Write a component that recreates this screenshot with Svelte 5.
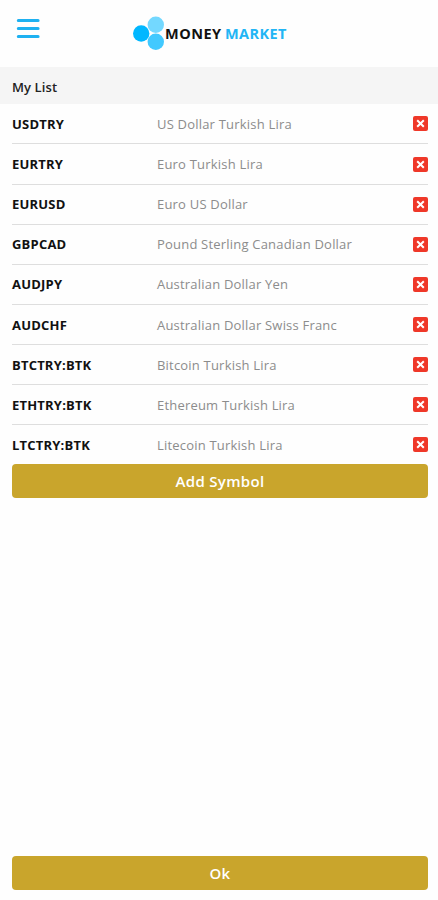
<script lang="ts">
  interface Item {
    symbol: string;
    name: string;
  }

  let items: Item[] = $state([
    { symbol: 'USDTRY', name: 'US Dollar Turkish Lira' },
    { symbol: 'EURTRY', name: 'Euro Turkish Lira' },
    { symbol: 'EURUSD', name: 'Euro US Dollar' },
    { symbol: 'GBPCAD', name: 'Pound Sterling Canadian Dollar' },
    { symbol: 'AUDJPY', name: 'Australian Dollar Yen' },
    { symbol: 'AUDCHF', name: 'Australian Dollar Swiss Franc' },
    { symbol: 'BTCTRY:BTK', name: 'Bitcoin Turkish Lira' },
    { symbol: 'ETHTRY:BTK', name: 'Ethereum Turkish Lira' },
    { symbol: 'LTCTRY:BTK', name: 'Litecoin Turkish Lira' },
  ]);

  function remove(symbol: string) {
    items = items.filter((item) => item.symbol !== symbol);
  }
</script>

<div class="screen">
  <header>
    <button class="menu" aria-label="Menu">
      <svg width="24" height="22" viewBox="0 0 24 22">
        <path d="M2.3 3.5h19.8M2.3 11.5h19.8M2.3 19.5h19.8" stroke="#1eb1f1" stroke-width="3" stroke-linecap="round" />
      </svg>
    </button>
    <div class="logo">
      <svg width="32" height="35" viewBox="0 0 32 35">
        <circle cx="22.8" cy="8.7" r="8.2" fill="#73d8ff" />
        <circle cx="22.8" cy="25.7" r="8.2" fill="#41c9ff" />
        <circle cx="8.2" cy="17.5" r="8.2" fill="#00b7ff" />
      </svg>
      <span class="money">MONEY</span>
      <span class="market">MARKET</span>
    </div>
  </header>

  <h2>My List</h2>

  <main>
    <ul>
      {#each items as item (item.symbol)}
        <li>
          <span class="symbol">{item.symbol}</span>
          <span class="name">{item.name}</span>
          <button class="remove" aria-label="Remove {item.symbol}" onclick={() => remove(item.symbol)}>
            <svg width="15" height="15" viewBox="0 0 15 15">
              <rect width="15" height="15" rx="2" fill="#ef3829" />
              <path d="M4.2 4.2l6.6 6.6M10.8 4.2l-6.6 6.6" stroke="#fff" stroke-width="2" />
            </svg>
          </button>
        </li>
      {/each}
    </ul>
    <button class="action">Add Symbol</button>
    <button class="action ok">Ok</button>
  </main>
</div>

<style>
  :global(body) {
    margin: 0;
    background: #fefefe;
  }

  .screen {
    display: flex;
    flex-direction: column;
    height: 900px;
    box-sizing: border-box;
    padding-bottom: 10px;
    background: #fefefe;
    font-family: 'Open Sans', 'Noto Sans', sans-serif;
  }

  button {
    padding: 0;
    border: 0;
    background: none;
    font-family: inherit;
    cursor: pointer;
  }

  svg {
    display: block;
  }

  header {
    display: flex;
    flex: none;
    height: 67px;
  }

  .menu {
    align-self: flex-start;
    margin: 17px 0 0 16px;
  }

  .logo {
    display: flex;
    align-items: center;
    height: 35px;
    margin: 16px 0 0 93px;
    font-size: 14.5px;
    font-weight: 700;
  }

  .money {
    width: 57px;
    color: #111;
    letter-spacing: 0.5px;
  }

  .market {
    margin-left: 3px;
    color: #22b5f5;
    letter-spacing: 0.4px;
  }

  h2 {
    flex: none;
    height: 37px;
    margin: 0;
    padding-left: 12px;
    background: #f5f5f5;
    color: #222;
    font-size: 13px;
    font-weight: 600;
    letter-spacing: 0.1px;
    line-height: 40px;
  }

  main {
    display: flex;
    flex: 1;
    flex-direction: column;
    padding: 0 10px 0 12px;
  }

  ul {
    margin: 0;
    padding: 0.3px 0 0;
    list-style: none;
  }

  li {
    display: flex;
    align-items: center;
    height: 40.15px;
    box-sizing: border-box;
    border-bottom: 1px solid #dedede;
    font-size: 13px;
    letter-spacing: 0.2px;
  }

  li:last-child {
    border-bottom-color: transparent;
  }

  .symbol {
    width: 145px;
    color: #111;
    font-weight: 700;
  }

  .name {
    flex: 1;
    color: #8c8c8c;
  }

  .action {
    height: 34px;
    margin-top: -1.3px;
    border-radius: 4px;
    background: #c9a52c;
    color: #fff;
    font-size: 15px;
    font-weight: 600;
    letter-spacing: 0.3px;
  }

  .ok {
    margin-top: auto;
  }
</style>
